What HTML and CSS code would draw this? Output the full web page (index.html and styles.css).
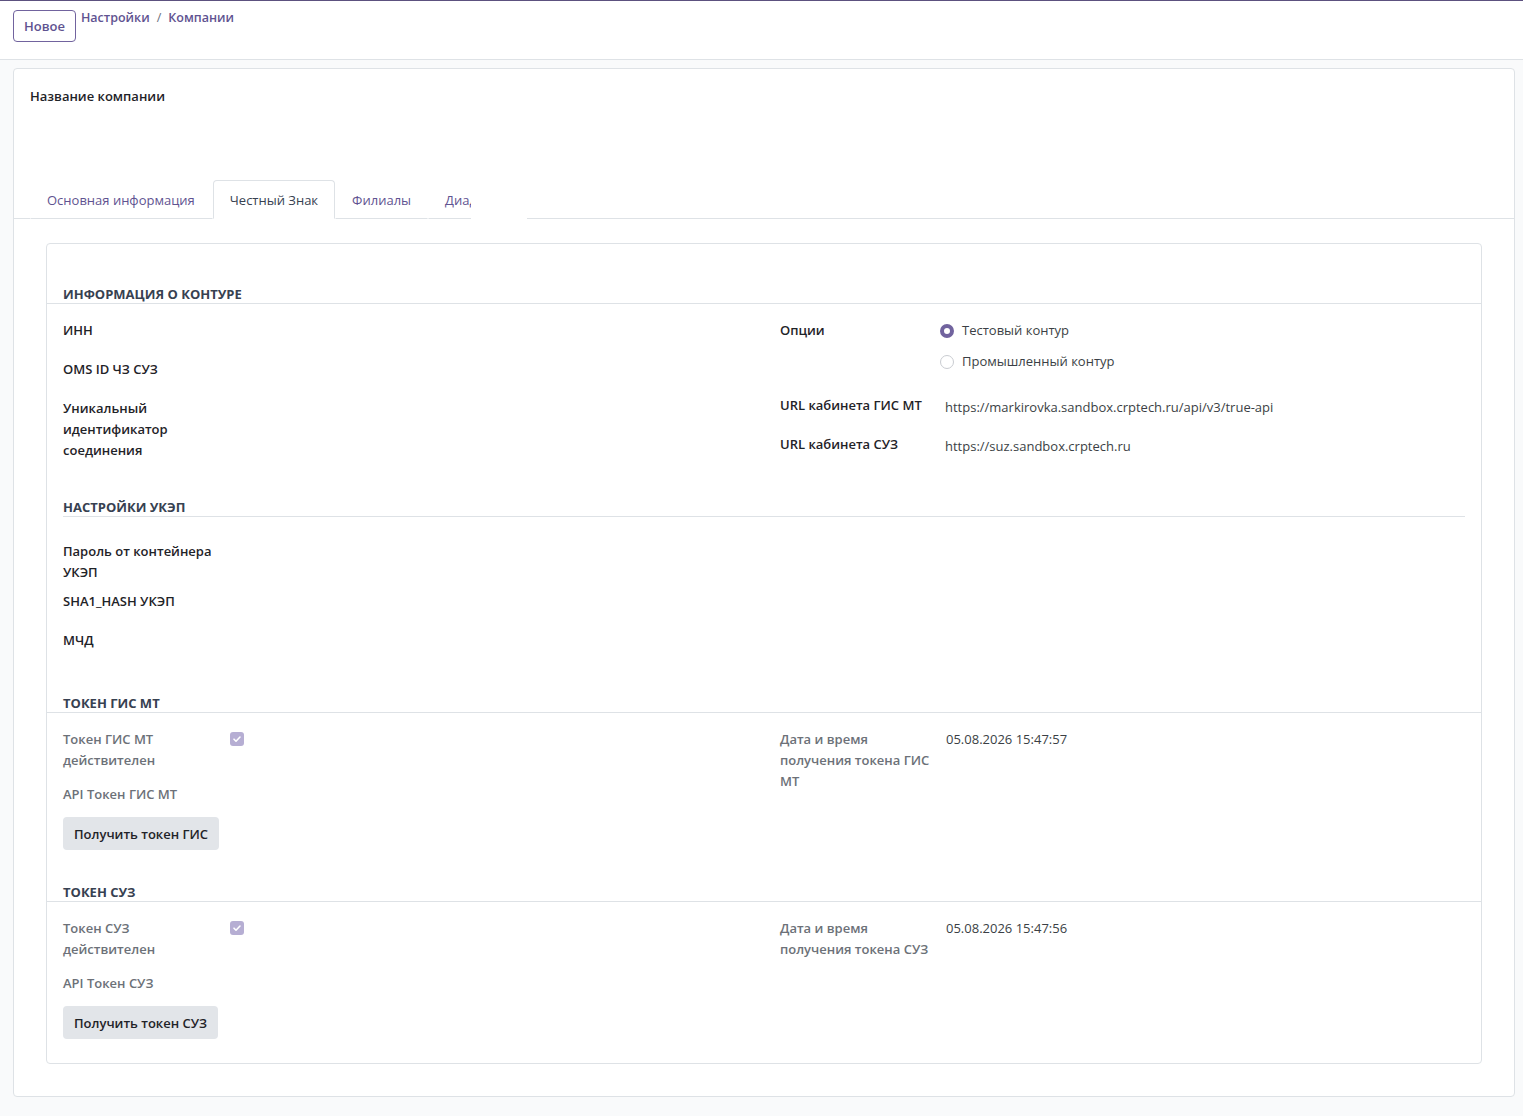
FILE: index.html
```html
<!DOCTYPE html>
<html lang="ru">
<head>
    <meta charset="UTF-8" />
    <meta name="viewport" content="width=device-width, initial-scale=1.0" />
    <title>Компании - Настройки</title>
    <link rel="stylesheet" href="styles.css">
</head>
<body>
    <!-- Панель управления -->
    <header class="control-panel">
        <button class="btn-new" type="button">Новое</button>
        <nav class="breadcrumb">
            <a href="#">Настройки</a>
            <span class="breadcrumb-sep">/</span>
            <a href="#">Компании</a>
        </nav>
    </header>

    <main class="content">
        <div class="sheet">
            <div class="sheet-title">Название компании</div>

            <!-- Вкладки формы -->
            <div class="tabs">
                <div class="tabs-list">
                    <a href="#" class="tab">Основная информация</a>
                    <a href="#" class="tab active">Честный Знак</a>
                    <a href="#" class="tab">Филиалы</a>
                    <a href="#" class="tab">Диадок</a>
                </div>
                <div class="tabs-more"></div>
                <div class="tabs-rest"></div>
            </div>

            <div class="tab-pane">
                <div class="box">

                    <div class="section-title wide">Информация о контуре</div>
                    <div class="group">
                        <div class="col">
                            <div class="row">
                                <div class="label">ИНН</div>
                                <div class="value"></div>
                            </div>
                            <div class="row">
                                <div class="label">OMS ID ЧЗ СУЗ</div>
                                <div class="value"></div>
                            </div>
                            <div class="row">
                                <div class="label">Уникальный идентификатор соединения</div>
                                <div class="value"></div>
                            </div>
                        </div>
                        <div class="col">
                            <div class="row">
                                <div class="label">Опции</div>
                                <div class="value">
                                    <div class="radio-list">
                                        <label class="radio checked"><span class="radio-dot"></span>Тестовый контур</label>
                                        <label class="radio"><span class="radio-dot"></span>Промышленный контур</label>
                                    </div>
                                </div>
                            </div>
                            <div class="row">
                                <div class="label">URL кабинета ГИС МТ</div>
                                <div class="value url">https://markirovka.sandbox.crptech.ru/api/v3/true-api</div>
                            </div>
                            <div class="row">
                                <div class="label">URL кабинета СУЗ</div>
                                <div class="value url">https://suz.sandbox.crptech.ru</div>
                            </div>
                        </div>
                    </div>

                    <div class="section-title">Настройки УКЭП</div>
                    <div class="group single spaced">
                        <div class="col">
                            <div class="row">
                                <div class="label">Пароль от контейнера УКЭП</div>
                                <div class="value"></div>
                            </div>
                            <div class="row">
                                <div class="label">SHA1_HASH УКЭП</div>
                                <div class="value"></div>
                            </div>
                            <div class="row">
                                <div class="label">МЧД</div>
                                <div class="value"></div>
                            </div>
                        </div>
                    </div>

                    <div class="section-title wide">Токен ГИС МТ</div>
                    <div class="group">
                        <div class="col">
                            <div class="row tall">
                                <div class="label muted">Токен ГИС МТ действителен</div>
                                <div class="value"><span class="checkbox"><svg viewBox="0 0 14 14"><path d="M4 7.2l2 2 4-4.2" /></svg></span></div>
                            </div>
                            <div class="row short">
                                <div class="label muted">API Токен ГИС МТ</div>
                                <div class="value"></div>
                            </div>
                            <div class="row">
                                <button class="btn-secondary" type="button">Получить токен ГИС</button>
                            </div>
                        </div>
                        <div class="col">
                            <div class="row">
                                <div class="label muted">Дата и время получения токена ГИС МТ</div>
                                <div class="value date">05.08.2026 15:47:57</div>
                            </div>
                        </div>
                    </div>

                    <div class="section-title wide">Токен СУЗ</div>
                    <div class="group">
                        <div class="col">
                            <div class="row tall">
                                <div class="label muted">Токен СУЗ действителен</div>
                                <div class="value"><span class="checkbox"><svg viewBox="0 0 14 14"><path d="M4 7.2l2 2 4-4.2" /></svg></span></div>
                            </div>
                            <div class="row short">
                                <div class="label muted">API Токен СУЗ</div>
                                <div class="value"></div>
                            </div>
                            <div class="row">
                                <button class="btn-secondary" type="button">Получить токен СУЗ</button>
                            </div>
                        </div>
                        <div class="col">
                            <div class="row">
                                <div class="label muted">Дата и время получения токена СУЗ</div>
                                <div class="value date">05.08.2026 15:47:56</div>
                            </div>
                        </div>
                    </div>

                </div>
            </div>
        </div>
    </main>
</body>
</html>
```

FILE: styles.css
```css
:root {
    --color-primary: #71639e;
    --color-primary-dark: #5f5391;
    --color-border: #dee2e6;
    --color-bg: #f9fafb;
    --color-text: #1f2328;
    --color-heading: #374151;
    --color-muted: #6c7178;
}

* {
    margin: 0;
    padding: 0;
    box-sizing: border-box;
}

body {
    font-family: 'Open Sans', 'Noto Sans', sans-serif;
    font-size: 13px;
    line-height: 21px;
    color: var(--color-text);
    background-color: var(--color-bg);
}

a {
    text-decoration: none;
}

/* Панель управления */
.control-panel {
    display: flex;
    align-items: flex-start;
    gap: 5px;
    height: 60px;
    padding: 9px 8px 0 13px;
    background: #ffffff;
    border-top: 1px solid #5c517f;
    border-bottom: 1px solid var(--color-border);
}

.btn-new {
    height: 32px;
    padding: 0 10px;
    font-family: inherit;
    font-size: 13px;
    font-weight: 600;
    color: var(--color-primary-dark);
    background: #ffffff;
    border: 1px solid var(--color-primary);
    border-radius: 4px;
    cursor: pointer;
}

.breadcrumb {
    display: flex;
    gap: 7px;
    margin-top: -3px;
    font-size: 12.5px;
    font-weight: 600;
}

.breadcrumb a {
    color: var(--color-primary-dark);
}

.breadcrumb-sep {
    color: #6b7280;
    font-weight: 400;
}

/* Карточка формы */
.content {
    padding: 8px 8px 19px 13px;
}

.sheet {
    padding: 16px;
    background: #ffffff;
    border: 1px solid var(--color-border);
    border-radius: 4px;
}

.sheet-title {
    font-weight: 600;
    height: 95px;
    padding-top: 1px;
}

/* Вкладки */
.tabs {
    display: flex;
    align-items: flex-end;
    margin: 0 -16px;
}

.tabs-list {
    display: flex;
    width: 457px;
    overflow: hidden;
    flex-shrink: 0;
}

.tabs-list::before {
    content: "";
    width: 16px;
    flex-shrink: 0;
    border-bottom: 1px solid var(--color-border);
}

.tab {
    flex-shrink: 0;
    height: 39px;
    padding: 1px 16px 0;
    line-height: 37px;
    color: var(--color-primary-dark);
    border: 1px solid transparent;
    border-bottom-color: var(--color-border);
    border-radius: 4px 4px 0 0;
}

.tab:first-child {
    padding-right: 17px;
}

.tab.active {
    color: var(--color-heading);
    border-color: var(--color-border);
    border-bottom-color: #ffffff;
}

.tabs-more {
    width: 56px;
    flex-shrink: 0;
}

.tabs-rest {
    flex: 1;
    border-bottom: 1px solid var(--color-border);
}

.tab-pane {
    padding: 24px 16px 16px;
}

.box {
    padding: 16px;
    border: 1px solid var(--color-border);
    border-radius: 4px;
}

/* Заголовки разделов */
.section-title {
    margin-top: 24px;
    height: 20px;
    padding-top: 1px;
    line-height: 19px;
    font-weight: 700;
    text-transform: uppercase;
    color: var(--color-heading);
    border-bottom: 1px solid var(--color-border);
}

.section-title.wide {
    margin-left: -16px;
    margin-right: -16px;
    padding: 1px 16px 0;
}

.group {
    display: grid;
    grid-template-columns: 1fr 1fr;
    column-gap: 32px;
    padding-top: 16px;
}

.group.single {
    grid-template-columns: 1fr;
}

.group.spaced {
    padding-top: 24px;
}

.row {
    display: flex;
    align-items: flex-start;
    min-height: 31px;
    margin-bottom: 8px;
}

.row.tall {
    min-height: 47px;
}

.row.short {
    min-height: 25px;
}

.label {
    width: 165px;
    flex-shrink: 0;
    padding-right: 12px;
    font-weight: 600;
}

.label.muted {
    color: var(--color-muted);
}

.value {
    flex: 1;
}

.value.url {
    padding-top: 2px;
    color: #3b3f45;
}

.value.date {
    padding-left: 1px;
    color: #3b3f45;
}

/* Переключатели и флажки */
.radio-list {
    padding-bottom: 15px;
}

.radio {
    display: flex;
    align-items: center;
    gap: 8px;
    margin-left: -5px;
    color: #3b3f45;
}

.radio + .radio {
    margin-top: 10px;
}

.radio-dot {
    width: 14px;
    height: 14px;
    border-radius: 50%;
    border: 1px solid #c9ccd1;
    background: #ffffff;
}

.radio.checked .radio-dot {
    border: 4px solid var(--color-primary);
}

.checkbox {
    display: inline-block;
    width: 14px;
    height: 14px;
    margin: 3px 0 0 2px;
    border-radius: 3px;
    background: #b6aed3;
    vertical-align: top;
}

.checkbox svg {
    display: block;
    width: 14px;
    height: 14px;
}

.checkbox path {
    fill: none;
    stroke: #ffffff;
    stroke-width: 1.6;
    stroke-linecap: round;
    stroke-linejoin: round;
}

.btn-secondary {
    height: 33px;
    padding: 0 11px;
    font-family: inherit;
    font-size: 13px;
    font-weight: 600;
    color: var(--color-text);
    background: #e2e5e9;
    border: none;
    border-radius: 4px;
    cursor: pointer;
}
```
